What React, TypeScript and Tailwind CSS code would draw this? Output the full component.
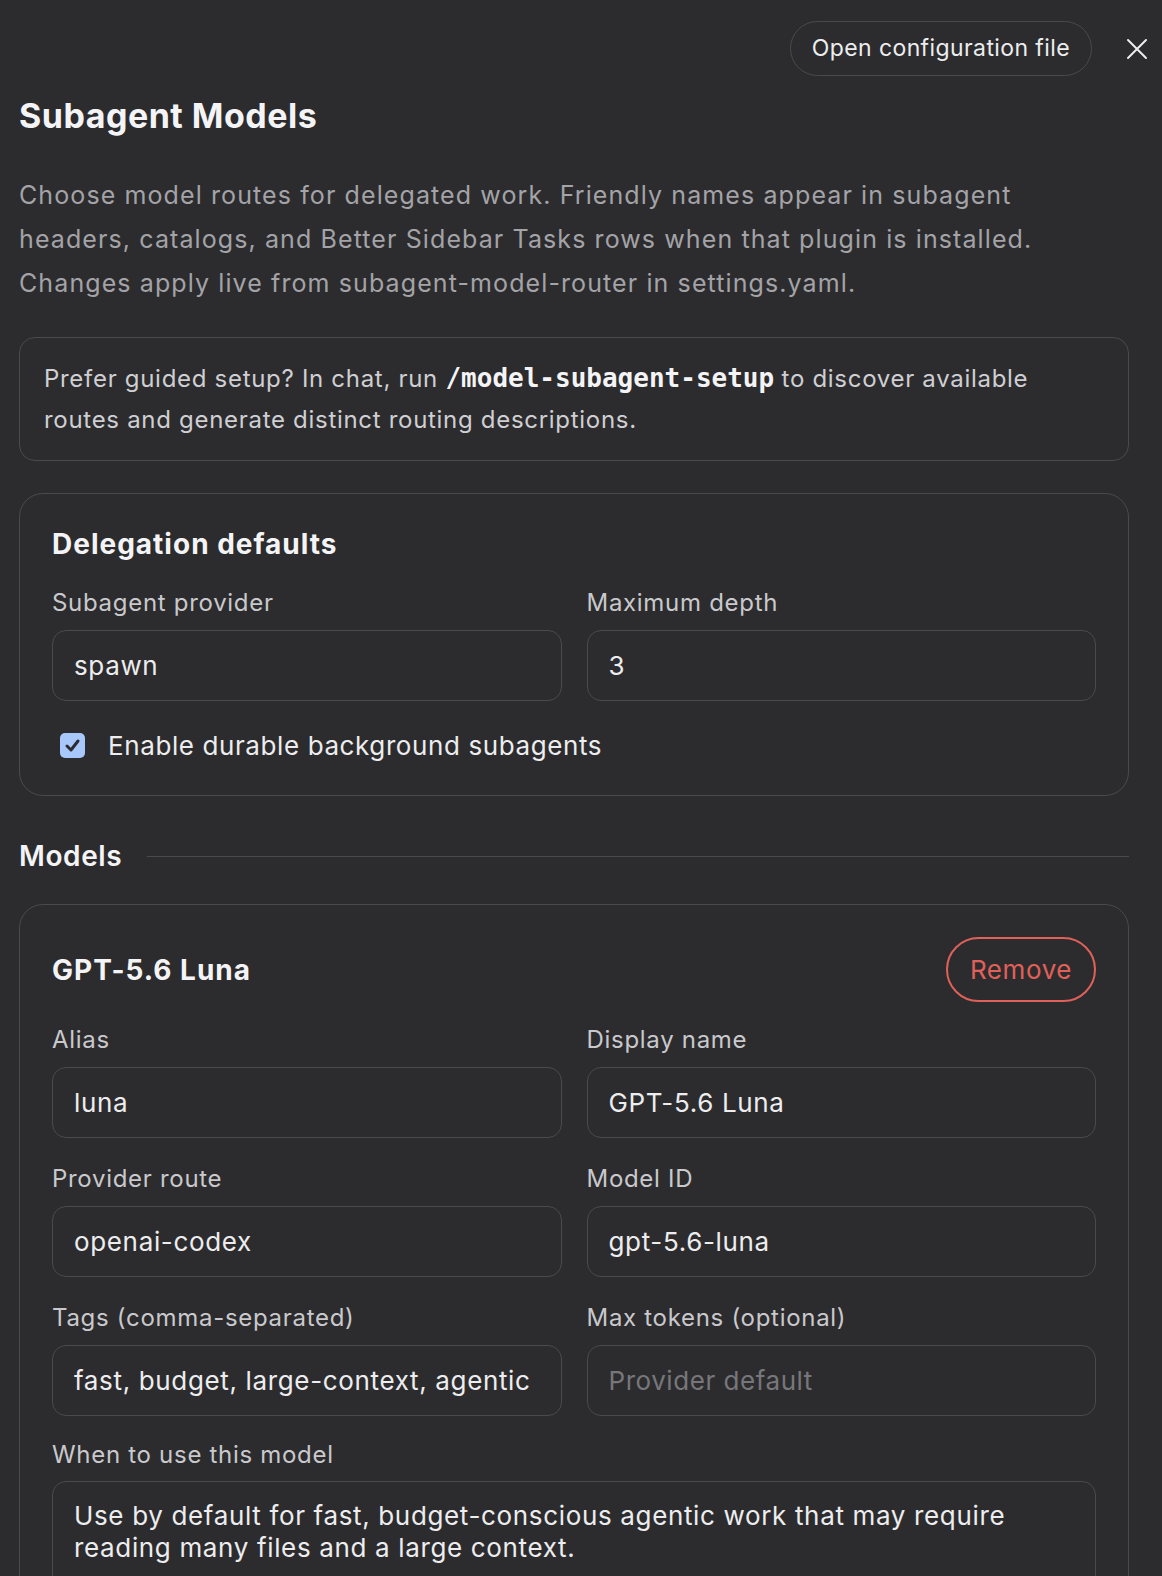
import React from "react";

function Field({ label, value, placeholder }: { label: string; value?: string; placeholder?: string }) {
  return (
    <div className="flex flex-col">
      <div className="text-[24px] leading-[30px] tracking-[0.7px] text-[#c9c9cd]">{label}</div>
      <div className="mt-[12px] h-[71px] rounded-[14px] border border-[#4a4a4e] px-[21px] flex items-center">
        {value ? (
          <span className="text-[26px] tracking-[0.65px] text-[#ededef]">{value}</span>
        ) : (
          <span className="text-[26px] tracking-[0.55px] text-[#77777b]">{placeholder}</span>
        )}
      </div>
    </div>
  );
}

export default function App() {
  return (
    <div
      className="min-h-[1576px] bg-[#2c2c2e] text-[#ededef] overflow-hidden"
      style={{ fontFamily: "Inter, 'Noto Sans', sans-serif" }}
    >
      <div className="flex justify-end items-center pt-[21px] pr-[14px] gap-[34px]">
        <button className="h-[55px] rounded-full border border-[#4a4a4e] px-[21px] text-[23px] tracking-[0.4px] text-[#ededef]">
          Open configuration file
        </button>
        <svg width="22" height="22" viewBox="0 0 22 22" fill="none" stroke="#ededef" strokeWidth="2" strokeLinecap="round">
          <path d="M2 2 L20 20 M20 2 L2 20" />
        </svg>
      </div>

      <div className="pl-[19px] pr-[33px]">
        <h1 className="mt-[20px] text-[34px] leading-[40px] tracking-[0.5px] font-bold text-[#f4f4f6]">Subagent Models</h1>
        <p className="mt-[37px] max-w-[1050px] text-[25px] leading-[44px] tracking-[1.1px] text-[#a3a3a8]">
          Choose model routes for delegated work. Friendly names appear in subagent headers, catalogs, and Better Sidebar Tasks rows when that plugin is installed. Changes apply live from subagent-model-router in settings.yaml.
        </p>

        <div className="mt-[32px] rounded-[16px] border border-[#4a4a4e] px-[24px] py-[20px] text-[24px] leading-[41px] tracking-[0.7px] text-[#cfcfd3]">
          Prefer guided setup? In chat, run{" "}
          <code
            className="font-bold text-[#f4f4f6] tracking-normal"
            style={{ fontFamily: "'DejaVu Sans Mono', monospace", fontSize: "26px" }}
          >
            /model-subagent-setup
          </code>{" "}
          to discover available routes and generate distinct routing descriptions.
        </div>

        <div className="mt-[32px] rounded-[24px] border border-[#4a4a4e] p-[32px] pb-[32px]">
          <h2 className="text-[28px] leading-[36px] tracking-[1px] font-bold text-[#f4f4f6]">Delegation defaults</h2>
          <div className="mt-[26px] grid grid-cols-2 gap-x-[25px]">
            <Field label="Subagent provider" value="spawn" />
            <Field label="Maximum depth" value="3" />
          </div>
          <div className="mt-[26px] flex items-center h-[36px]">
            <div className="ml-[8px] w-[25px] h-[25px] rounded-[5px] bg-[#a8c7fa] flex items-center justify-center">
              <svg width="17" height="17" viewBox="0 0 17 17" fill="none" stroke="#2c2c2e" strokeWidth="3" strokeLinecap="round" strokeLinejoin="round">
                <path d="M3 9 L7 13 L14 4" />
              </svg>
            </div>
            <span className="ml-[23px] text-[26px] tracking-[0.6px] text-[#ededef]">Enable durable background subagents</span>
          </div>
        </div>

        <div className="mt-[42px] flex items-center h-[36px]">
          <h2 className="text-[28px] tracking-[0.6px] font-semibold text-[#f4f4f6]">Models</h2>
          <div className="ml-[25px] flex-1 h-px bg-[#4a4a4e]" />
        </div>

        <div className="mt-[30px] rounded-[24px] border border-[#4a4a4e] p-[32px] pb-[60px]">
          <div className="flex items-center justify-between h-[65px]">
            <h3 className="text-[28px] tracking-[1px] font-bold text-[#f4f4f6]">GPT-5.6 Luna</h3>
            <button className="h-[65px] w-[150px] rounded-full border-2 border-[#e0605a] text-[26px] tracking-[0.6px] text-[#e0605a]">
              Remove
            </button>
          </div>
          <div className="mt-[23px] grid grid-cols-2 gap-x-[25px] gap-y-[26px]">
            <Field label="Alias" value="luna" />
            <Field label="Display name" value="GPT-5.6 Luna" />
            <Field label="Provider route" value="openai-codex" />
            <Field label="Model ID" value="gpt-5.6-luna" />
            <Field label="Tags (comma-separated)" value="fast, budget, large-context, agentic" />
            <Field label="Max tokens (optional)" placeholder="Provider default" />
          </div>
          <div className="mt-[24px] flex flex-col">
            <div className="text-[24px] leading-[30px] tracking-[0.7px] text-[#c9c9cd]">When to use this model</div>
            <div className="mt-[11px] h-[160px] rounded-[14px] border border-[#4a4a4e] px-[21px] pt-[18px] text-[26px] leading-[32px] tracking-[0.65px] text-[#ededef]">
              Use by default for fast, budget-conscious agentic work that may require reading many files and a large context.
            </div>
          </div>
        </div>
      </div>
    </div>
  );
}
